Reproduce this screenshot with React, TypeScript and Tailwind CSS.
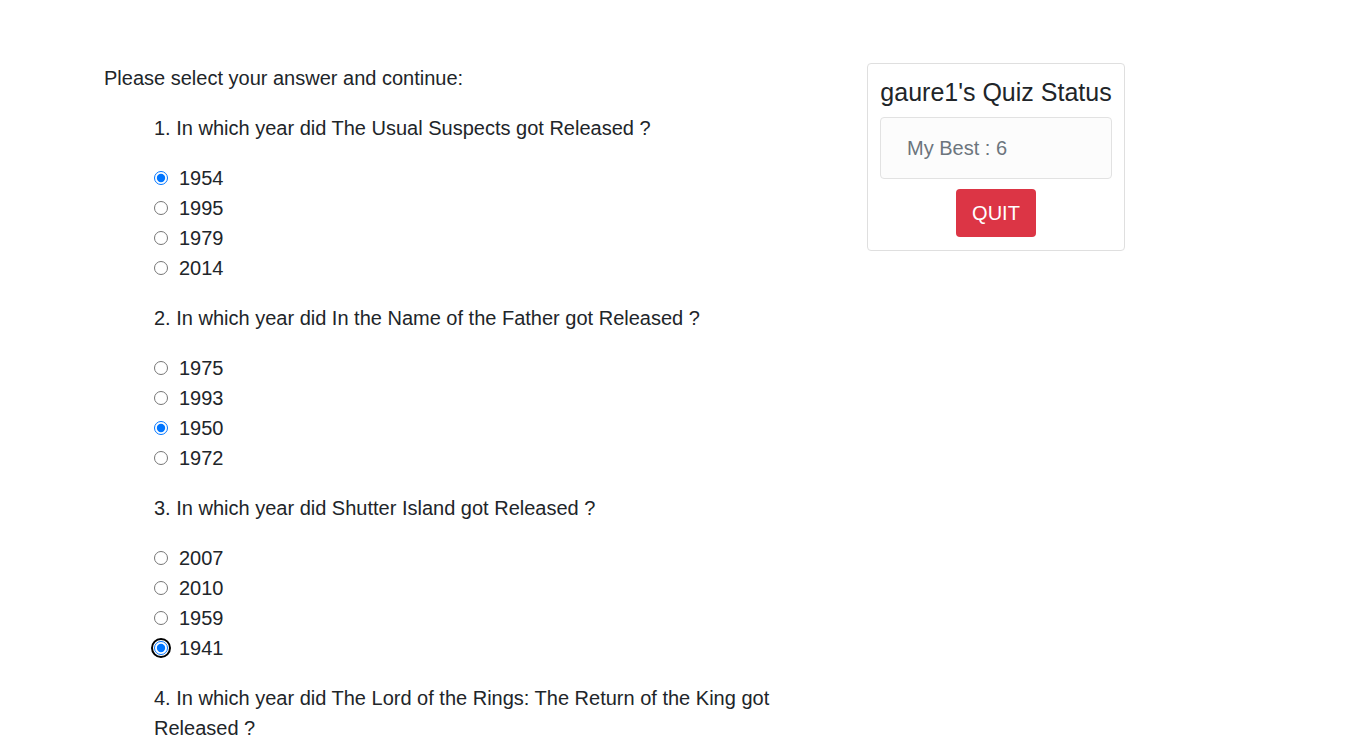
import React from "react";

const questions = [
  { q: "1. In which year did The Usual Suspects got Released ?", opts: ["1954", "1995", "1979", "2014"], sel: 0 },
  { q: "2. In which year did In the Name of the Father got Released ?", opts: ["1975", "1993", "1950", "1972"], sel: 2 },
  { q: "3. In which year did Shutter Island got Released ?", opts: ["2007", "2010", "1959", "1941"], sel: 3, focus: true },
  { q: "4. In which year did The Lord of the Rings: The Return of the King got Released ?", opts: ["2003", "1988", "1967", "2001"], sel: -1 },
];

export default function App() {
  return (
    <div className="min-h-screen bg-white text-[#212529] text-[20px] leading-[30px]" style={{ fontFamily: '"Liberation Sans", Arial, sans-serif' }}>
      <div className="flex pt-[63px] pl-[104px]">
        <div className="w-[730px] shrink-0">
          <p className="m-0">Please select your answer and continue:</p>
          <div className="pl-[50px] pt-[20px]">
            {questions.map((item, qi) => (
              <div key={qi} className="mb-[20px]">
                <p className="mb-[20px]">{item.q}</p>
                <div className="flex flex-col">
                  {item.opts.map((o, oi) => {
                    const focused = item.focus && oi === item.sel;
                    return (
                      <label key={oi} className="flex items-center h-[30px]">
                        <span
                          className={
                            "inline-flex items-center justify-center w-[14px] h-[14px] mr-[11px] rounded-full " +
                            (focused ? "outline-2 outline-black outline-offset-[1px]" : "")
                          }
                        >
                          <input
                            type="radio"
                            name={`q${qi}`}
                            defaultChecked={oi === item.sel}
                            className="m-0 w-[14px] h-[14px]"
                          />
                        </span>
                        <span>{o}</span>
                      </label>
                    );
                  })}
                </div>
              </div>
            ))}
          </div>
        </div>
        <div className="ml-[33px]">
          <div className="w-[258px] border border-[#dfdfdf] rounded-[4px] px-[12px] pt-[12px] pb-[13px] flex flex-col items-center">
            <h4 className="text-[25px] leading-[29px] pt-[2px] mb-[10px] whitespace-nowrap">gaure1's Quiz Status</h4>
            <div className="w-full h-[62px] border border-[#e2e2e2] rounded-[4px] bg-[#fcfcfc] flex items-center pl-[26px] text-[#6c757d]">
              My Best : 6
            </div>
            <button className="mt-[10px] w-[80px] h-[48px] bg-[#dc3545] text-white rounded-[4px] text-[20px]">QUIT</button>
          </div>
        </div>
      </div>
    </div>
  );
}
